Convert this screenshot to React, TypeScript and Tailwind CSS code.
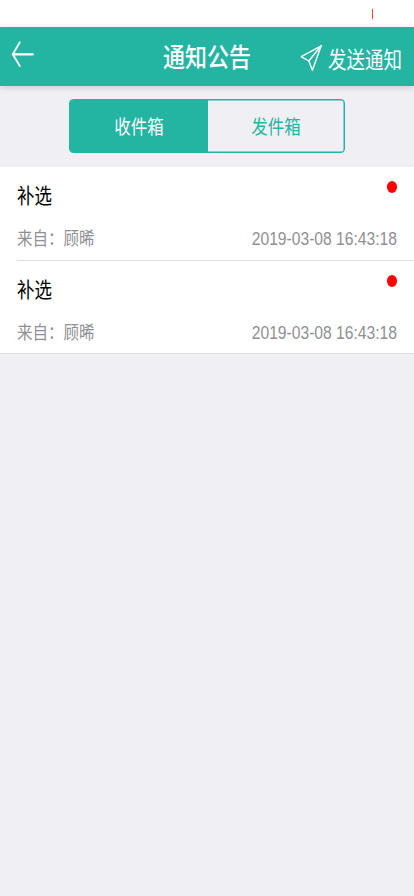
import React from "react";

const notices = [
  { id: 1, title: "补选", from: "顾晞", time: "2019-03-08 16:43:18" },
  { id: 2, title: "补选", from: "顾晞", time: "2019-03-08 16:43:18" },
];

const BackIcon = () => (
  <svg width="24" height="28" viewBox="0 0 24 28" fill="none" stroke="white">
    <path d="M21.8 14.3H1.8" strokeWidth="2.2" strokeLinecap="round" />
    <path
      d="M8.8 2.3L1.8 14.3L8.8 26"
      strokeWidth="1.8"
      strokeLinecap="round"
      strokeLinejoin="round"
    />
  </svg>
);

const SendIcon = () => (
  <svg
    width="23"
    height="28"
    viewBox="0 0 23 28"
    fill="none"
    stroke="white"
    strokeWidth="1.4"
    strokeLinejoin="round"
    strokeLinecap="round"
  >
    <path d="M21.2 1.8L1.2 12.6L8.8 17L12.4 26.3Z" />
    <path d="M21.2 1.8L8.8 17" />
  </svg>
);

const Header = () => {
  return (
    <header className="relative flex h-[59px] items-start justify-between bg-[#24b4a2] pl-[11px] pr-3 text-white shadow-[0_2px_6px_rgba(0,0,0,0.14)]">
      <button className="mt-[13px]" aria-label="返回">
        <BackIcon />
      </button>
      <h1 className="absolute left-[163px] top-[15.5px] origin-center scale-y-[1.2] whitespace-nowrap text-[22px] font-medium leading-8">
        通知公告
      </h1>
      <button className="mt-[17px] flex items-start gap-[5px]">
        <SendIcon />
        <span className="mt-px scale-y-[1.2] text-[18.5px] leading-8">
          发送通知
        </span>
      </button>
    </header>
  );
};

const Tabs = () => {
  return (
    <div className="flex h-[81px] justify-center pt-[13px]">
      <div className="flex h-[54px] w-[276px] overflow-hidden rounded-[4px] border border-[#24b4a2] text-[16.5px] shadow-[inset_0_0_0_0.5px_#24b4a2]">
        <button className="flex w-[138px] items-center justify-center bg-[#24b4a2] pt-0.5 text-white">
          <span className="scale-y-[1.2]">收件箱</span>
        </button>
        <button className="flex flex-1 items-center justify-center pt-0.5 text-[#24b4a2]">
          <span className="scale-y-[1.2]">发件箱</span>
        </button>
      </div>
    </div>
  );
};

const App = () => {
  return (
    <div className="min-h-screen w-full bg-[#efeff4] font-['Liberation_Sans','Noto_Sans_CJK_SC',sans-serif]">
      <div className="flex h-[27px] justify-end bg-white pr-[41px] pt-[9px]">
        <div className="h-[10px] w-px bg-[#ff3b30]" />
      </div>
      <Header />
      <Tabs />
      <ul className="border-b border-[#dedee2] bg-white">
        {notices.map((item, i) => (
          <li key={item.id} className="pl-[17px]">
            <div
              className={
                i < notices.length - 1
                  ? "h-[94px] border-b border-[#dedee0] pr-[17px]"
                  : "h-[92px] pr-[17px]"
              }
            >
              <div className="flex h-[58px] items-start justify-between">
                <span className="mt-[13px] scale-y-[1.2] text-[17.5px] leading-8 text-black">
                  {item.title}
                </span>
                <span className="mt-[14px] h-[11.5px] w-[10px] rounded-[50%] bg-[#ff0000]" />
              </div>
              <div className="flex h-7 items-center justify-between text-[15.5px] text-[#8f8f94]">
                <span className="scale-y-[1.2]">来自：{item.from}</span>
                <span className="scale-y-[1.2] text-[15.65px]">
                  {item.time}
                </span>
              </div>
            </div>
          </li>
        ))}
      </ul>
    </div>
  );
};

export default App;
